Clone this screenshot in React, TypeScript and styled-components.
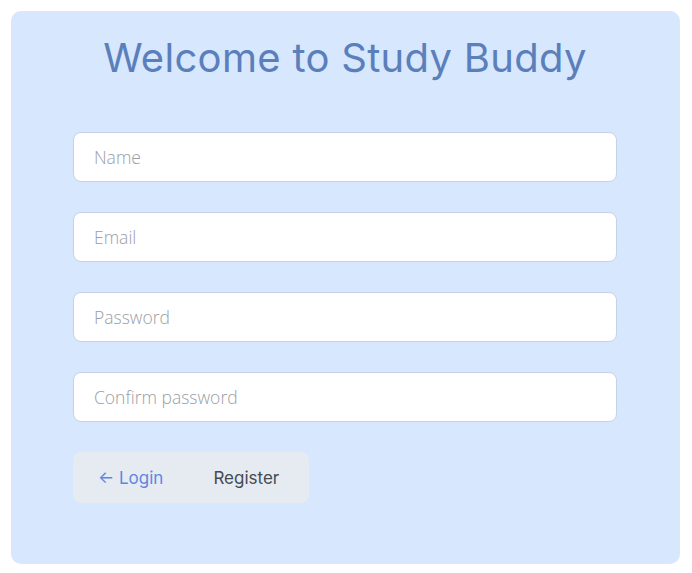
import styled, { createGlobalStyle } from "styled-components"

const GlobalStyle = createGlobalStyle`
    * { box-sizing: border-box; }
    body {
        margin: 0;
        background: #ffffff;
        font-family: "Open Sans", "Noto Sans", sans-serif;
    }
`

const PageWrapper = styled.div`
    padding: 11px 12px 9px 11px;
    height: 573px;
`

const Card = styled.div`
    height: 100%;
    background-color: #d6e7fe;
    border-radius: 10px;
    padding: 22px 63px 0 62px;
    display: flex;
    flex-direction: column;
`

const Title = styled.h1`
    margin: 0 0 49px;
    font-family: "Inter", "Lato", sans-serif;
    font-weight: 400;
    font-size: 40px;
    line-height: 50px;
    letter-spacing: 0.3px;
    text-align: center;
    color: #5b7fba;
`

const Form = styled.form`
    display: flex;
    flex-direction: column;
    gap: 30px;
`

const Input = styled.input`
    width: 100%;
    height: 50px;
    padding: 0 20px;
    border: 1px solid #c4d3e6;
    border-radius: 8px;
    background: #ffffff;
    font-family: "Open Sans", sans-serif;
    font-weight: 300;
    font-size: 17.5px;
    color: #333;
    outline: none;
    &::placeholder {
        color: #9a9ea5;
    }
`

const ButtonGroup = styled.div`
    display: flex;
    align-items: center;
    width: 236px;
    height: 51px;
    background-color: #e6ebf2;
    border-radius: 8px;
    padding: 0 0 0 25px;
    gap: 50px;
`

const LinkButton = styled.button<{ $primary?: boolean }>`
    border: none;
    background: none;
    padding: 0;
    cursor: pointer;
    font-family: "Inter", "Lato", sans-serif;
    font-size: 17px;
    color: ${p => (p.$primary ? "#5b88e2" : "#444a52")};
`

export default function App() {
    return (
        <>
            <GlobalStyle />
            <PageWrapper>
                <Card>
                    <Title>Welcome to Study Buddy</Title>
                    <Form onSubmit={e => e.preventDefault()}>
                        <Input type="text" placeholder="Name" />
                        <Input type="email" placeholder="Email" />
                        <Input type="password" placeholder="Password" />
                        <Input type="password" placeholder="Confirm password" />
                        <ButtonGroup>
                            <LinkButton type="button" $primary>← Login</LinkButton>
                            <LinkButton type="submit">Register</LinkButton>
                        </ButtonGroup>
                    </Form>
                </Card>
            </PageWrapper>
        </>
    )
}
